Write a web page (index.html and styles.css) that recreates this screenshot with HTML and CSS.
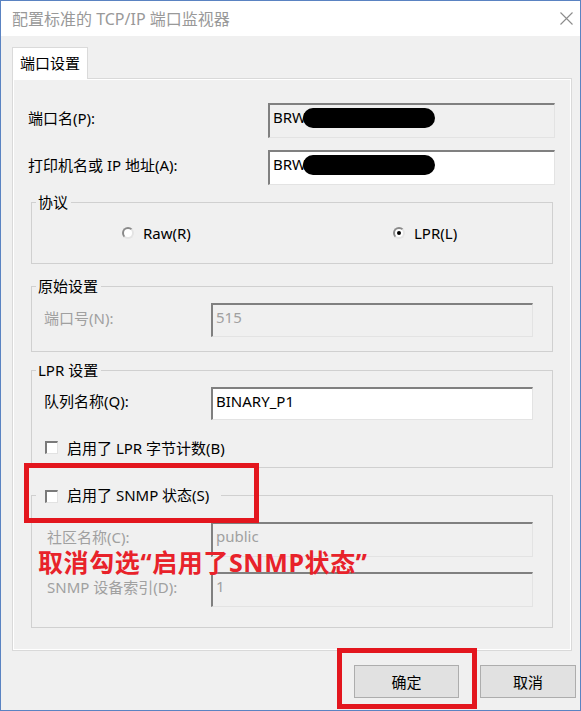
FILE: index.html
```html
<!DOCTYPE html>
<html lang="zh-CN">
<head>
<meta charset="UTF-8">
<meta name="viewport" content="width=device-width, initial-scale=1.0">
<title>配置标准的 TCP/IP 端口监视器</title>
<link rel="stylesheet" href="styles.css">
</head>
<body>
  <div class="window">
    <div class="title-bar">
      <span class="title">配置标准的 TCP/IP 端口监视器</span>
      <svg class="close-icon" width="13" height="13" viewBox="0 0 13 13">
        <path d="M0.5 0.5L12.5 12.5M12.5 0.5L0.5 12.5" stroke="#8c8c8c" stroke-width="1.1" fill="none"/>
      </svg>
    </div>

    <div class="client">
      <div class="tab">端口设置</div>
      <div class="tab-panel">
        <div class="form-row">
          <span class="label-wide">端口名(P):</span>
          <div class="field field-wide readonly">BRW<span class="redact"></span></div>
        </div>
        <div class="form-row second">
          <span class="label-wide">打印机名或 IP 地址(A):</span>
          <div class="field field-wide">BRW<span class="redact"></span></div>
        </div>

        <fieldset class="group group-protocol">
          <legend>协议</legend>
          <div class="radio-row">
            <label class="radio"><span class="radio-dot"></span>Raw(R)</label>
            <label class="radio"><span class="radio-dot checked"></span>LPR(L)</label>
          </div>
        </fieldset>

        <fieldset class="group group-raw">
          <legend>原始设置</legend>
          <div class="group-row">
            <span class="label-group dim">端口号(N):</span>
            <div class="field field-group disabled">515</div>
          </div>
        </fieldset>

        <fieldset class="group group-lpr">
          <legend>LPR 设置</legend>
          <div class="group-row">
            <span class="label-group">队列名称(Q):</span>
            <div class="field field-group">BINARY_P1</div>
          </div>
          <div class="check-row">
            <span class="checkbox"></span>启用了 LPR 字节计数(B)
          </div>
        </fieldset>

        <fieldset class="group group-snmp">
          <legend class="check-legend"><span class="checkbox"></span>启用了 SNMP 状态(S)</legend>
          <div class="group-row">
            <span class="label-group dim snmp-label">社区名称(C):</span>
            <div class="field field-group disabled">public</div>
          </div>
          <div class="group-row snmp-index">
            <span class="label-group dim snmp-label">SNMP 设备索引(D):</span>
            <div class="field field-group disabled">1</div>
          </div>
        </fieldset>
      </div>

      <div class="button-bar">
        <button class="btn btn-ok">确定</button>
        <button class="btn btn-cancel">取消</button>
      </div>
    </div>

    <!-- red annotations on top of the dialog -->
    <div class="mark mark-snmp"></div>
    <div class="mark mark-ok"></div>
    <div class="note">取消勾选“启用了SNMP状态”</div>
  </div>
</body>
</html>
```

FILE: styles.css
```css
* {
  box-sizing: border-box;
}
html, body {
  margin: 0;
  padding: 0;
}
body {
  font-family: "Noto Sans", "Noto Sans CJK SC", sans-serif;
  font-size: 15px;
  color: #000;
  background: #fff;
}
.window {
  position: relative;
  width: 581px;
  height: 711px;
  border: 1px solid #5a83c2;
  background: #f0f0f0;
  overflow: hidden;
}
.title-bar {
  height: 35px;
  background: #fff;
  display: flex;
  align-items: center;
  justify-content: space-between;
  padding: 0 7px 0 11px;
}
.title {
  font-size: 16px;
  line-height: 20px;
  color: #999;
}
.client {
  padding: 11px 8px 0 11px;
}
.tab {
  position: relative;
  z-index: 1;
  width: 76px;
  height: 32px;
  margin-bottom: -1px;
  padding-left: 7px;
  line-height: 30px;
  background: #fff;
  border: 1px solid #dadada;
  border-bottom: none;
}
.tab-panel {
  height: 573px;
  border: 1px solid #d9d9d9;
  box-shadow: inset 1px 1px 0 #fff, inset -1px -1px 0 #fff;
  padding: 24px 0 0 15px;
}
.form-row {
  display: flex;
  align-items: center;
}
.form-row.second {
  margin-top: 12px;
}
.label-wide {
  width: 240px;
  padding-bottom: 6px;
}
.field {
  border-style: solid;
  border-width: 2px 1px 1px 2px;
  border-color: #808080 #e3e3e3 #e3e3e3 #808080;
  background: #fff;
  padding: 2px 3px;
  line-height: 20px;
  white-space: nowrap;
}
.field-wide {
  width: 287px;
  height: 35px;
}
.field.readonly {
  background: #f0f0f0;
}
.field.disabled {
  background: #f0f0f0;
  color: #a0a0a0;
}
.redact {
  display: inline-block;
  vertical-align: middle;
  width: 132px;
  height: 20px;
  margin: -2px 0 0 -3px;
  border-radius: 10px;
  background: #000;
}

/* group boxes */
.group {
  width: 522px;
  margin: 0 0 0 3px;
  padding: 0 19px 0 4px;
  border: 1px solid #d0d0d0;
  min-width: 0;
}
.group legend {
  height: 20px;
  line-height: 20px;
  padding: 0 3px 0 2px;
}
.group-protocol {
  margin-top: 7px;
  padding-top: 11px;
  padding-bottom: 20px;
}
.group-raw {
  margin-top: 12px;
  padding-top: 7px;
  padding-bottom: 14px;
}
.group-lpr {
  margin-top: 8px;
  padding-top: 7px;
  padding-bottom: 10px;
}
.group-snmp {
  margin-top: 17px;
  padding-top: 17px;
  padding-bottom: 20px;
}
.group-row {
  display: flex;
  align-items: center;
  padding-left: 8px;
}
.group-row.snmp-index {
  margin-top: 15px;
}
.label-group {
  width: 167px;
  padding-bottom: 6px;
}
.snmp-label {
  padding-left: 3px;
}
.field-group {
  width: 322px;
  height: 34px;
}
.group-lpr .field-group {
  height: 33px;
}
.group-snmp .field-group {
  height: 35px;
}
.dim {
  color: #a0a0a0;
}

.radio-row {
  display: grid;
  grid-template-columns: 271px auto;
  padding-left: 86px;
  height: 20px;
}
.radio {
  display: flex;
  align-items: center;
  gap: 9px;
  line-height: 20px;
}
.radio-dot {
  position: relative;
  width: 12px;
  height: 12px;
  border-radius: 50%;
  border: 2px solid;
  border-color: #8a8a8a #e4e4e4 #e4e4e4 #8a8a8a;
  background: #fff;
}
.radio-dot.checked::after {
  content: "";
  position: absolute;
  left: 2px;
  top: 2px;
  width: 4px;
  height: 4px;
  border-radius: 50%;
  background: #000;
}

.checkbox {
  display: inline-block;
  width: 13px;
  height: 13px;
  border-style: solid;
  border-width: 2px 1px 1px 2px;
  border-color: #7a7a7a #e2e2e2 #e2e2e2 #7a7a7a;
  background: #fff;
}
.check-row {
  display: flex;
  align-items: center;
  gap: 9px;
  height: 20px;
  margin-top: 17px;
  padding-left: 9px;
}
.group .check-legend {
  padding: 0 12px 0 2px;
}
.check-legend .checkbox {
  vertical-align: -2px;
  margin: 0 9px 0 7px;
}

/* buttons */
.button-bar {
  display: flex;
  justify-content: flex-end;
  gap: 21px;
  margin: 14px -4px 0 0;
}
.btn {
  height: 33px;
  font-family: "Noto Sans", "Noto Sans CJK SC", sans-serif;
  font-size: 15px;
  color: #000;
  background: #e1e1e1;
  border: 1px solid #adadad;
  padding: 0;
}
.btn-ok {
  width: 105px;
}
.btn-cancel {
  width: 96px;
}

/* annotations */
.mark {
  position: absolute;
  border: 5px solid #e3161e;
}
.mark-snmp {
  left: 23px;
  top: 462px;
  width: 235px;
  height: 60px;
}
.mark-ok {
  left: 336px;
  top: 647px;
  width: 140px;
  height: 61px;
}
.note {
  position: absolute;
  left: 37px;
  top: 546px;
  font-size: 25px;
  font-weight: bold;
  line-height: 30px;
  letter-spacing: 0.6px;
  color: #e8222a;
  white-space: nowrap;
}
```
